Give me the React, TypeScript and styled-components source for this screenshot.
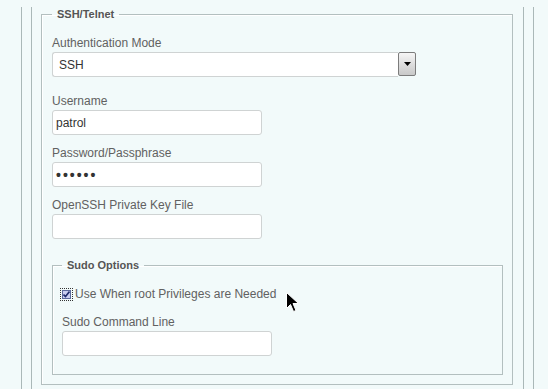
import styled, { createGlobalStyle } from "styled-components";

const GlobalStyle = createGlobalStyle`
  html, body {
    margin: 0;
    padding: 0;
    background: #f2fafa;
    font-family: "Liberation Sans", Arial, sans-serif;
  }
`;

const Page = styled.div`
  position: relative;
  height: 389px;
  overflow: hidden;
  padding-left: 21px;
  box-sizing: border-box;
`;

const OuterFrame = styled.div`
  width: 513px;
  height: 100%;
  box-sizing: border-box;
  border-left: 1px solid #aab8b8;
  border-right: 1px solid #aab8b8;
  padding: 0 9px;
`;

const InnerFrame = styled.div`
  height: 100%;
  box-sizing: border-box;
  border-left: 1px solid #aab8b8;
  border-right: 1px solid #aab8b8;
  padding: 0 10px 0 9px;
`;

const Fieldset = styled.fieldset<{ $inner?: boolean }>`
  margin: ${(p) => (p.$inner ? "19px 0 0" : "7px 0 0")};
  padding: ${(p) => (p.$inner ? "15px 9px 18px 9px" : "15px 9px 9px 10px")};
  border: 1px solid #b3bfbf;
  box-shadow: inset 1px 1px 0 #ffffff;
  min-width: 0;
`;

const Legend = styled.legend`
  padding: 0 5px;
  font-size: 11px;
  font-weight: bold;
  line-height: 14px;
  color: #555;
`;

const Field = styled.div<{ $gap?: number }>`
  margin-bottom: ${(p) => p.$gap ?? 11}px;
`;

const Label = styled.div`
  font-size: 12px;
  line-height: 14px;
  color: #616161;
  margin-bottom: 2px;
`;

const TextBox = styled.div<{ $width?: number }>`
  width: ${(p) => p.$width ?? 210}px;
  height: 25px;
  box-sizing: border-box;
  background: #fff;
  border: 1px solid #cfd3d3;
  border-radius: 3px;
  padding: 0 3px;
  display: flex;
  align-items: center;
  font-size: 12px;
  color: #333;
`;

const Dots = styled.span`
  font-size: 14px;
  font-weight: bold;
  letter-spacing: 2px;
  color: #333;
`;

const SelectBox = styled.div`
  display: flex;
  width: 364px;
  height: 25px;
`;

const SelectValue = styled.div`
  flex: 1;
  box-sizing: border-box;
  background: #fff;
  border: 1px solid #cfd3d3;
  border-right: none;
  border-radius: 3px 0 0 3px;
  padding: 0 6px;
  display: flex;
  align-items: center;
  font-size: 12px;
  color: #333;
`;

const SelectButton = styled.div`
  width: 18px;
  height: 24px;
  box-sizing: border-box;
  border: 1px solid #7c7c7c;
  border-radius: 2px;
  background: linear-gradient(#f6f6f6, #d9d9d9 60%, #c9c9c9);
  display: flex;
  align-items: center;
  justify-content: center;
`;

const CheckRow = styled.label`
  display: flex;
  align-items: center;
  gap: 2px;
  margin-left: -2px;
  margin-bottom: 14px;
  font-size: 12px;
  line-height: 14px;
  color: #616161;
`;

const CheckBox = styled.span`
  width: 13px;
  height: 13px;
  box-sizing: border-box;
  border: 1px dotted #333;
  padding: 1px;
  display: flex;
`;

const CheckInner = styled.span`
  flex: 1;
  background: #c9cdf0;
  border: 1px solid #5c6a9c;
  display: flex;
  align-items: center;
  justify-content: center;
`;

const Cursor = styled.svg`
  position: absolute;
  left: 286px;
  top: 292px;
`;

export default function App() {
  return (
    <>
      <GlobalStyle />
      <Page>
        <OuterFrame>
          <InnerFrame>
            <Fieldset>
              <Legend>SSH/Telnet</Legend>
              <Field $gap={17}>
                <Label>Authentication Mode</Label>
                <SelectBox>
                  <SelectValue>SSH</SelectValue>
                  <SelectButton>
                    <svg width="7" height="4" viewBox="0 0 7 4">
                      <path d="M0 0h7L3.5 4z" fill="#000" />
                    </svg>
                  </SelectButton>
                </SelectBox>
              </Field>
              <Field>
                <Label>Username</Label>
                <TextBox>patrol</TextBox>
              </Field>
              <Field>
                <Label>Password/Passphrase</Label>
                <TextBox>
                  <Dots>••••••</Dots>
                </TextBox>
              </Field>
              <Field $gap={0}>
                <Label>OpenSSH Private Key File</Label>
                <TextBox />
              </Field>
              <Fieldset $inner>
                <Legend>Sudo Options</Legend>
                <CheckRow>
                  <CheckBox>
                    <CheckInner>
                      <svg width="7" height="7" viewBox="0 0 7 7">
                        <path d="M0.5 3.5l2 2 4-5" stroke="#1d2a6a" strokeWidth="1.6" fill="none" />
                      </svg>
                    </CheckInner>
                  </CheckBox>
                  Use When root Privileges are Needed
                </CheckRow>
                <Field $gap={0}>
                  <Label>Sudo Command Line</Label>
                  <TextBox />
                </Field>
              </Fieldset>
            </Fieldset>
          </InnerFrame>
        </OuterFrame>
        <Cursor width="13" height="21" viewBox="0 0 13 21">
          <path
            d="M0.5 0.5v16l4-4 3 7 2.5-1-3-7h5.5z"
            fill="#000"
            stroke="#fff"
            strokeWidth="1"
          />
        </Cursor>
      </Page>
    </>
  );
}
